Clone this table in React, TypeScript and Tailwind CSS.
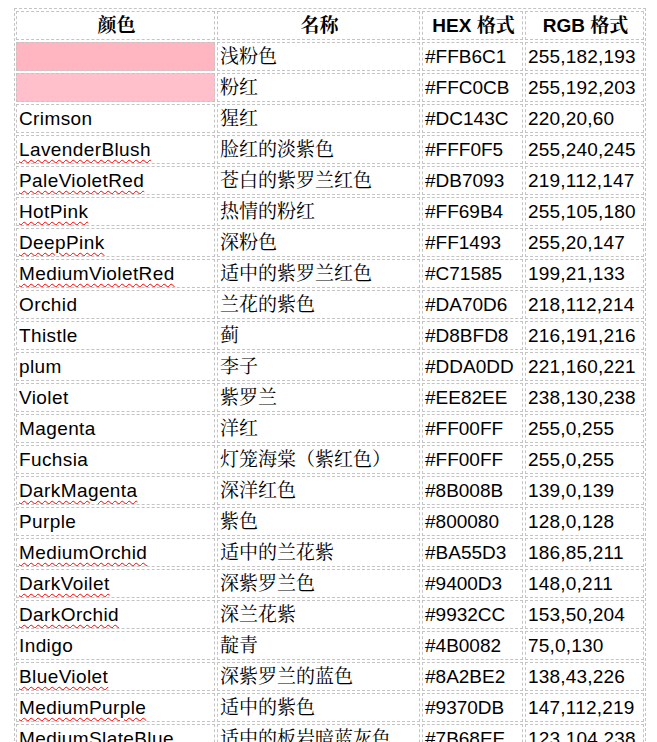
import React from "react";

type Row = { en: string; zh: string; hex: string; rgb: string; bg?: string; spell?: boolean };

const rows: Row[] = [
  { en: "", zh: "浅粉色", hex: "#FFB6C1", rgb: "255,182,193", bg: "bg-[#FFB6C1]" },
  { en: "", zh: "粉红", hex: "#FFC0CB", rgb: "255,192,203", bg: "bg-[#FFC0CB]" },
  { en: "Crimson", zh: "猩红", hex: "#DC143C", rgb: "220,20,60" },
  { en: "LavenderBlush", zh: "脸红的淡紫色", hex: "#FFF0F5", rgb: "255,240,245", spell: true },
  { en: "PaleVioletRed", zh: "苍白的紫罗兰红色", hex: "#DB7093", rgb: "219,112,147", spell: true },
  { en: "HotPink", zh: "热情的粉红", hex: "#FF69B4", rgb: "255,105,180", spell: true },
  { en: "DeepPink", zh: "深粉色", hex: "#FF1493", rgb: "255,20,147", spell: true },
  { en: "MediumVioletRed", zh: "适中的紫罗兰红色", hex: "#C71585", rgb: "199,21,133", spell: true },
  { en: "Orchid", zh: "兰花的紫色", hex: "#DA70D6", rgb: "218,112,214" },
  { en: "Thistle", zh: "蓟", hex: "#D8BFD8", rgb: "216,191,216" },
  { en: "plum", zh: "李子", hex: "#DDA0DD", rgb: "221,160,221" },
  { en: "Violet", zh: "紫罗兰", hex: "#EE82EE", rgb: "238,130,238" },
  { en: "Magenta", zh: "洋红", hex: "#FF00FF", rgb: "255,0,255" },
  { en: "Fuchsia", zh: "灯笼海棠（紫红色）", hex: "#FF00FF", rgb: "255,0,255" },
  { en: "DarkMagenta", zh: "深洋红色", hex: "#8B008B", rgb: "139,0,139", spell: true },
  { en: "Purple", zh: "紫色", hex: "#800080", rgb: "128,0,128" },
  { en: "MediumOrchid", zh: "适中的兰花紫", hex: "#BA55D3", rgb: "186,85,211", spell: true },
  { en: "DarkVoilet", zh: "深紫罗兰色", hex: "#9400D3", rgb: "148,0,211", spell: true },
  { en: "DarkOrchid", zh: "深兰花紫", hex: "#9932CC", rgb: "153,50,204", spell: true },
  { en: "Indigo", zh: "靛青", hex: "#4B0082", rgb: "75,0,130" },
  { en: "BlueViolet", zh: "深紫罗兰的蓝色", hex: "#8A2BE2", rgb: "138,43,226", spell: true },
  { en: "MediumPurple", zh: "适中的紫色", hex: "#9370DB", rgb: "147,112,219", spell: true },
  { en: "MediumSlateBlue", zh: "适中的板岩暗蓝灰色", hex: "#7B68EE", rgb: "123,104,238", spell: true },
];

const cell =
  "h-[29px] border border-dashed border-[#c4c4c4] flex items-center pl-[2px] whitespace-nowrap overflow-hidden";
const head = cell + " justify-center font-bold";

export default function App() {
  return (
    <div
      className="h-[742px] overflow-hidden bg-white text-black text-[19px] leading-[27px] pt-[8px] pl-[14px]"
      style={{ fontFamily: '"Liberation Sans", Arial, "Noto Serif CJK SC", "Noto Sans CJK SC", sans-serif' }}
    >
      <div className="inline-grid grid-cols-[199px_203px_101px_119px] gap-[2px] border border-dashed border-[#c4c4c4] pt-[2px] px-[1px] pb-[2px]">
        <div className={head}>颜色</div>
        <div className={head}>名称</div>
        <div className={head}>HEX 格式</div>
        <div className={head}>RGB 格式</div>
        {rows.map((r, i) => (
          <React.Fragment key={i}>
            <div className={cell + " tracking-[0.4px] " + (r.bg ?? "")}>
              {r.en && (
                <span
                  className={
                    r.spell
                      ? "underline decoration-wavy decoration-[#ff0000] decoration-1 underline-offset-[3px]"
                      : ""
                  }
                >
                  {r.en}
                </span>
              )}
            </div>
            <div className={cell + " pl-[1px]"}>{r.zh}</div>
            <div className={cell + " pl-[1px]"}>{r.hex}</div>
            <div className={cell + " pl-[1px] tracking-[0.2px]"}>{r.rgb}</div>
          </React.Fragment>
        ))}
      </div>
    </div>
  );
}
